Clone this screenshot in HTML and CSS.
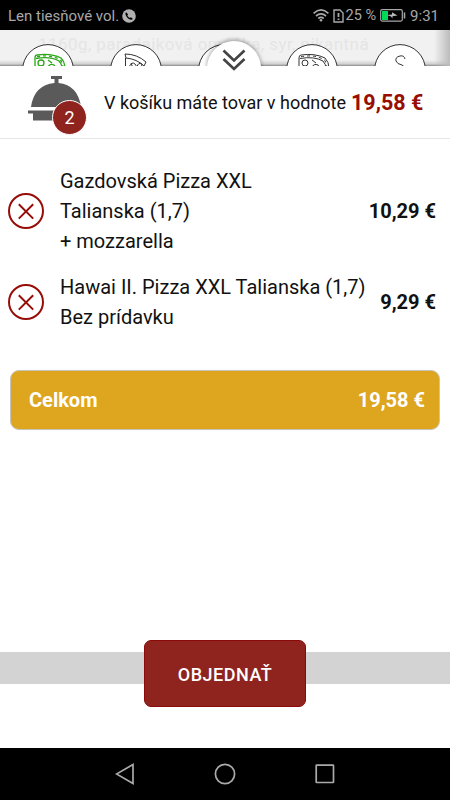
FILE: index.html
```html
<!DOCTYPE html>
<html lang="sk">
<head>
<meta charset="utf-8">
<title>Košík</title>
<link rel="stylesheet" href="styles.css">
</head>
<body>
<div class="phone">
  <header class="status">
    <span class="carrier">Len tiesňové vol.</span>
    <svg class="call" width="14" height="14" viewBox="0 0 14 14"><circle cx="7" cy="7" r="6.8" fill="#b0b0b0"/><path d="M4.2 3.2c-.9.6-1 1.700-.4 3 1 2.100 2.400 3.500 4.500 4.400 1.200.5 2 .1 2.500-.8l-1.900-1.500-1 .8C6.800 8.600 5.900 7.700 5.300 6.500l.8-.9z" fill="#000"/></svg>
    <span class="grow"></span>
    <svg class="wifi" width="16" height="13" viewBox="0 0 16 13" fill="none" stroke="#a8a8a8" stroke-width="1.700"><path d="M.6 4.300Q8-2.400 15.400 4.300M3 7Q8 2.600 13 7M5.300 9.500Q8 7.200 10.700 9.500"/><circle cx="8" cy="11.300" r="1.300" fill="#a8a8a8" stroke="none"/></svg>
    <svg class="sim" width="11" height="14" viewBox="0 0 11 14" fill="none" stroke="#a8a8a8" stroke-width="1.400"><path d="M1 1h6l3 3v9H1z"/><path d="M5.500 4v4M5.500 9.500V11" stroke-width="1.800"/></svg>
    <span class="percent">25 %</span>
    <svg class="battery" width="26" height="13" viewBox="0 0 26 13"><rect x=".7" y=".7" width="21.600" height="11.400" rx="1.500" fill="none" stroke="#a8a8a8" stroke-width="1.200"/><path d="M2 2h6v9H2z" fill="#00d85a"/><path d="M7 6l5-.4V3.200L17.500 6.500l-5 .7V9.500L11 7.500z" fill="#b8b8b8"/><path d="M24.500 3.500v6" stroke="#a8a8a8" stroke-width="1.500"/></svg>
    <span class="time">9:31</span>
  </header>

  <section class="menu">
    <p class="faded">1160g, paradajková omáčka, syr, pikantná</p>
    <div class="categories">
      <svg class="cat" viewBox="0 0 52 52"><circle cx="26" cy="26" r="25.400"/><g class="green"><path d="M13 24V14Q13 11 15 11Q29 9 39 14Q43 18 43 24"/><path d="M14 14.500Q28 12 37 17Q40 20 40 25"/><path d="M15 12.700Q30 10 39 16.500L41.500 24" stroke-dasharray="3 3"/><circle cx="19" cy="19" r="3"/><path d="M26 16l4 3M17 25q5-4 8 0M25 24q3-5 7-3l3 4"/></g></svg>
      <svg class="cat" viewBox="0 0 52 52"><circle cx="26" cy="26" r="25.400"/><path d="M15 10Q27 10 36 18l-2 4Q27 15 16 14zM15.500 14v11M19 23q3-6 6-3t2 6M27 23q1-5 5-3l-1 6M21 19l2 5"/></svg>
      <svg class="cat" viewBox="0 0 52 52"><circle cx="26" cy="26" r="25.400"/></svg>
      <svg class="cat" viewBox="0 0 52 52"><circle cx="26" cy="26" r="25.400"/><path d="M13 24V14Q13 11 15 11Q29 9 39 14Q43 18 43 24"/><path d="M14 14.500Q28 12 37 17Q40 20 40 25"/><path d="M15 12.700Q30 10 39 16.500L41.500 24" stroke-dasharray="3 3"/><circle cx="19" cy="19" r="3"/><path d="M26 16l4 3M17 25q5-4 8 0M25 24q3-5 7-3l3 4"/></svg>
      <svg class="cat" viewBox="0 0 52 52"><circle cx="26" cy="26" r="25.400"/><path d="M31 15Q30 11 26 12Q21 13 22 17Q23 20 28 21Q31 22 31 26"/></svg>
    </div>
  </section>

  <main class="sheet">
    <div class="handle"><svg width="24" height="23" viewBox="0 0 24 23" fill="none" stroke="#444" stroke-width="2.700"><path d="M1.500 1.500L12 11.500 22.500 1.500M1.500 10L12 20 22.500 10"/></svg></div>
    <div class="summary">
      <div class="basket">
        <svg width="56" height="48" viewBox="0 0 56 48" fill="#5a5a5a"><path d="M23 0h11v3h-3.500v4Q50 9 53 31H3Q6 9 26.500 7V3H23zM0 34.500h56v3h-4v7H5v-7H0z"/></svg>
        <span class="badge">2</span>
      </div>
      <span class="label">V košíku máte tovar v hodnote</span>
      <strong class="sum">19,58 €</strong>
    </div>
    <div class="items">
      <div class="item">
        <svg class="remove" viewBox="0 0 36 36"><circle cx="18" cy="18" r="17"/><path d="M10.800 11.200l14.400 14.400M25.200 11.200L10.800 25.600"/></svg>
        <div class="name">Gazdovská Pizza XXL<br>Talianska (1,7)<br>+ mozzarella</div>
        <strong class="price">10,29 €</strong>
      </div>
      <div class="item">
        <svg class="remove" viewBox="0 0 36 36"><circle cx="18" cy="18" r="17"/><path d="M10.800 11.200l14.400 14.400M25.200 11.200L10.800 25.600"/></svg>
        <div class="name">Hawai II. Pizza XXL Talianska (1,7)<br>Bez prídavku</div>
        <strong class="price">9,29 €</strong>
      </div>
    </div>
    <div class="total"><span>Celkom</span><span class="amount">19,58 €</span></div>
    <div class="order"><button class="submit">OBJEDNAŤ</button></div>
  </main>

  <nav class="navbar">
    <svg width="20" height="22" viewBox="0 0 20 22"><path d="M18 1.500v19L1.500 11z"/></svg>
    <svg width="22" height="22" viewBox="0 0 22 22"><circle cx="11" cy="11" r="9.600"/></svg>
    <svg width="20" height="20" viewBox="0 0 20 20"><rect x="1.200" y="1.200" width="17.300" height="17.300" rx=".5"/></svg>
  </nav>
</div>
</body>
</html>
```
FILE: styles.css
```css
* { box-sizing: border-box; }
body { margin: 0; font-family: Roboto, "Liberation Sans", sans-serif; }
.phone { width: 450px; height: 800px; display: flex; flex-direction: column; overflow: hidden; background: #fff; }
svg { display: block; flex: none; }
.status { height: 30px; flex: none; background: #000; color: #a8a8a8; display: flex; align-items: center; padding: 1px 11px 0 8px; font-size: 14.500px; white-space: nowrap; }
.carrier { font-size: 15px; }
.call { margin-left: 3px; }
.grow { flex: 1; }
.sim { margin-left: 4px; }
.percent { margin-left: 2px; }
.battery { margin-left: 4px; }
.time { margin-left: 4px; font-size: 15px; }
.menu { height: 36px; flex: none; overflow: hidden; background: linear-gradient(90deg, transparent 434px, #bbb 450px), linear-gradient(#f1f1f1 30px, #d0d0d0 34px, #888 36px); }
.faded { margin: 5px 0 0 38px; height: 9px; line-height: 18px; font-size: 17px; letter-spacing: .43px; color: #e5e5e5; white-space: nowrap; }
.categories { display: flex; gap: 36px; padding-left: 22px; }
.cat { width: 52px; height: 52px; fill: none; stroke: #333; stroke-width: 1; }
.cat > circle { fill: #fff; }
.green { stroke: #2aa617; stroke-width: 1.300; }
.sheet { position: relative; height: 682px; flex: none; background: #fff; display: flex; flex-direction: column; }
.handle { position: absolute; left: 207px; top: -25px; width: 54px; height: 54px; border-radius: 50%; background: #fff; box-shadow: 0 -1px 4px rgba(0,0,0,.4); clip-path: inset(-6px -6px 29px -6px); display: flex; justify-content: center; padding-top: 8px; z-index: 1; }
.handle { clip-path: polygon(-6px -6px, 60px -6px, 60px 25px, 40px 25px, 40px 34px, 14px 34px, 14px 25px, -6px 25px); }
.summary { height: 73px; flex: none; display: flex; align-items: center; padding-left: 28px; border-bottom: 1px solid #e6e6e6; white-space: nowrap; }
.basket { position: relative; width: 58px; height: 48px; margin-top: -4px; }
.badge { position: absolute; left: 24px; top: 24px; width: 35px; height: 35px; border: 1px solid #fff; border-radius: 50%; background: #8f241f; color: #fff; font-size: 18px; line-height: 33px; text-align: center; }
.label { margin-left: 18px; font-size: 18px; color: #111; }
.sum { margin-left: 5px; font-size: 21.500px; color: #970d00; }
.items { padding: 27px 14px 0 8px; }
.item { display: flex; align-items: center; margin-bottom: 16px; }
.remove { width: 36px; height: 36px; margin-top: -1px; fill: none; stroke: #970d08; stroke-width: 2; }
.name { flex: 1; margin-left: 16px; font-size: 20px; line-height: 30px; color: #111; white-space: nowrap; }
.price { margin-top: -1px; font-size: 20px; color: #111; }
.total { margin: 22px 10px 0; height: 60px; border: 1px solid #c8c4bc; border-radius: 9px; background: #dea51e; color: #fff; display: flex; align-items: center; justify-content: space-between; padding: 0 14px 0 18px; font-size: 20px; font-weight: 700; }
.order { margin-top: 210px; height: 68px; display: flex; justify-content: center; background: linear-gradient(transparent 12px, #d3d3d3 12px, #d3d3d3 44px, transparent 44px); }
.submit { width: 162px; height: 67px; border: 1px solid #8a0a0a; border-radius: 7px; background: #8f241f; color: #fff; font: 500 18px Roboto, sans-serif; letter-spacing: .5px; padding: 2px 0 0; }
.navbar { height: 52px; flex: none; background: #000; display: flex; align-items: center; justify-content: center; gap: 79px; }
.navbar svg { fill: none; stroke: #aaa; stroke-width: 1.700; }
```
